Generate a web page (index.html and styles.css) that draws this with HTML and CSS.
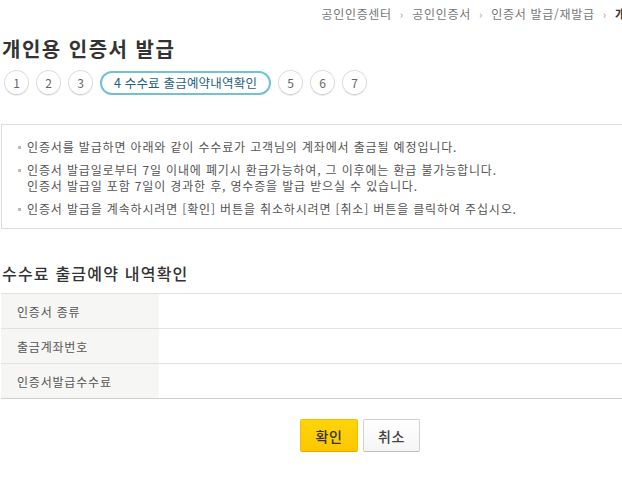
FILE: index.html
```html
<!DOCTYPE html>
<html lang="ko">
<head>
<meta charset="utf-8">
<title>개인용 인증서 발급</title>
<link rel="stylesheet" href="styles.css">
</head>
<body>
<div class="page">
  <nav class="crumbs">
    <span class="crumb">공인인증센터</span><span class="sep">›</span>
    <span class="crumb">공인인증서</span><span class="sep">›</span>
    <span class="crumb">인증서 발급/재발급</span><span class="sep">›</span>
    <strong class="crumb current">개인용 인증서 발급</strong>
  </nav>
  <h1 class="title">개인용 인증서 발급</h1>
  <ol class="steps">
    <li class="step">1</li>
    <li class="step">2</li>
    <li class="step">3</li>
    <li class="step active">4 수수료 출금예약내역확인</li>
    <li class="step">5</li>
    <li class="step">6</li>
    <li class="step">7</li>
  </ol>
  <div class="notice">
    <ul class="notice-list">
      <li>인증서를 발급하면 아래와 같이 수수료가 고객님의 계좌에서 출금될 예정입니다.</li>
      <li>인증서 발급일로부터 7일 이내에 폐기시 환급가능하여, 그 이후에는 환급 불가능합니다.<br>인증서 발급일 포함 7일이 경과한 후, 영수증을 발급 받으실 수 있습니다.</li>
      <li>인증서 발급을 계속하시려면 [확인] 버튼을 취소하시려면 [취소] 버튼을 클릭하여 주십시오.</li>
    </ul>
  </div>
  <h2 class="subtitle">수수료 출금예약 내역확인</h2>
  <table class="info">
    <tr><th>인증서 종류</th><td></td></tr>
    <tr><th>출금계좌번호</th><td></td></tr>
    <tr><th>인증서발급수수료</th><td></td></tr>
  </table>
  <div class="actions">
    <button class="btn btn-ok">확인</button>
    <button class="btn btn-cancel">취소</button>
  </div>
</div>
</body>
</html>
```
FILE: styles.css
```css
html, body {
  margin: 0;
  padding: 0;
  background: #fff;
  overflow: hidden;
}
body {
  font-family: "Noto Sans CJK KR", "Noto Sans", sans-serif;
  color: #333;
}
.page {
  width: 718px;
  margin-left: 1px;
}
.crumbs {
  display: flex;
  justify-content: flex-end;
  align-items: center;
  height: 16px;
  padding-top: 6px;
  font-size: 12px;
  line-height: 16px;
  color: #777;
  letter-spacing: 0.7px;
}
.crumb { white-space: nowrap; }
.sep {
  margin: 0 9px 0 8px;
  color: #999;
  font-size: 11px;
  letter-spacing: 0;
}
.current {
  color: #333;
  font-weight: 700;
  letter-spacing: 0.9px;
}
.title {
  margin: 14px 0 0 1px;
  font-size: 20px;
  font-weight: 700;
  line-height: 26px;
  letter-spacing: 1.5px;
  color: #333;
}
.steps {
  list-style: none;
  margin: 8px 0 0 3px;
  padding: 0;
  display: flex;
  gap: 7px;
}
.step {
  box-sizing: border-box;
  width: 25px;
  height: 25px;
  border: 1px solid #ddd;
  border-bottom-color: #ccc;
  border-radius: 13px;
  font-size: 12px;
  line-height: 23px;
  text-align: center;
  color: #666;
  box-shadow: 0 1px 0 #eee;
}
.step.active {
  width: 171px;
  height: 24px;
  margin-top: 1px;
  border: 2px solid #72c2d3;
  color: #1f5f7e;
  line-height: 19px;
  font-size: 12.5px;
  letter-spacing: 0.2px;
  box-shadow: none;
}
.notice {
  margin-top: 29px;
  border: 1px solid #ddd;
  padding: 14px 10px 11px 12px;
}
.notice-list {
  list-style: none;
  margin: 0;
  padding: 0;
  display: flex;
  flex-direction: column;
  gap: 7px;
}
.notice-list li {
  position: relative;
  padding-left: 13px;
  font-size: 12px;
  line-height: 16px;
  color: #555;
  letter-spacing: 0.85px;
}
.notice-list li::before {
  content: "";
  position: absolute;
  left: 4px;
  top: 7px;
  width: 3px;
  height: 3px;
  background: #bbb;
}
.subtitle {
  margin: 33px 0 0 1px;
  font-size: 16px;
  font-weight: 500;
  line-height: 22px;
  letter-spacing: 1.2px;
  color: #333;
}
.info {
  margin-top: 9px;
  width: 100%;
  border-collapse: collapse;
  border-top: 1px solid #e2e2e2;
  border-bottom: 1px solid #cfcfcf;
}
.info th, .info td {
  height: 34px;
  padding: 0;
  border-top: 1px solid #e2e2e2;
  font-size: 12px;
  font-weight: 400;
  color: #555;
  text-align: left;
  letter-spacing: 0.8px;
}
.info th {
  width: 158px;
  padding-left: 16px;
  box-sizing: border-box;
  background: #f6f6f4;
}
.actions {
  display: flex;
  justify-content: center;
  gap: 5px;
  margin-top: 20px;
}
.btn {
  box-sizing: border-box;
  height: 33px;
  padding: 0;
  font-family: inherit;
  font-size: 14px;
  font-weight: 500;
  letter-spacing: 0.5px;
  border-radius: 2px;
  cursor: pointer;
}
.btn-ok {
  width: 58px;
  background: linear-gradient(#ffd40a, #fbc700);
  border: 1px solid #f2c000;
  border-bottom-color: #e0ac00;
  color: #333;
}
.btn-cancel {
  width: 57px;
  background: linear-gradient(#ffffff, #f5f5f5);
  border: 1px solid #d0d0d0;
  border-bottom-color: #bdbdbd;
  color: #444;
}
```
